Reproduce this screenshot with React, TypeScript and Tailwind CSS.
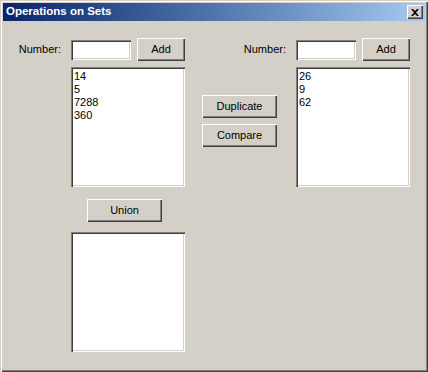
const sunken =
  'bg-white shadow-[inset_1px_1px_#808080,inset_2px_2px_#404040,inset_-1px_-1px_#ffffff,inset_-2px_-2px_#d4d0c8]'
const raised =
  'bg-[#d4d0c8] shadow-[inset_1px_1px_#ffffff,inset_-1px_-1px_#404040,inset_-2px_-2px_#808080] flex items-center justify-center text-black'

function Button({ label, className }: { label: string; className: string }) {
  return <button className={`${raised} ${className}`}>{label}</button>
}

function ListBox({ items, className }: { items: string[]; className: string }) {
  return (
    <div className={`${sunken} ${className} pt-[3px] pl-[3px] flex flex-col leading-[13px] text-black`}>
      {items.map((it) => (
        <span key={it}>{it}</span>
      ))}
    </div>
  )
}

export default function App() {
  const left = ['14', '5', '7288', '360']
  const right = ['26', '9', '62']

  return (
    <div
      className="w-[428px] h-[372px] bg-[#d4d0c8] p-[3px] flex flex-col text-[11px] shadow-[inset_1px_1px_#d4d0c8,inset_2px_2px_#ffffff,inset_-1px_-1px_#404040,inset_-2px_-2px_#808080]"
      style={{ fontFamily: '"Liberation Sans", Arial, sans-serif' }}
    >
      {/* Title bar */}
      <div className="h-[18px] w-[422px] flex items-center justify-between bg-gradient-to-r from-[#0a246a] to-[#a6caf0] pl-[3px] pr-[2px]">
        <span className="text-white font-bold text-[11.5px]">Operations on Sets</span>
        <div className={`${raised} w-[16px] h-[14px]`}>
          <svg width="8" height="7" viewBox="0 0 8 7">
            <path d="M0 0h2l2 2 2-2h2L5 3.5 8 7H6L4 5 2 7H0l3-3.5z" fill="#000" />
          </svg>
        </div>
      </div>

      {/* Number rows */}
      <div className="flex items-center mt-[17px] h-[23px]">
        <span className="w-[68px] text-right pr-[10px] text-black">Number:</span>
        <input className={`${sunken} w-[60px] h-[20px] outline-none px-[3px]`} />
        <Button label="Add" className="ml-[6px] w-[48px] h-[23px]" />
        <span className="ml-[51px] w-[60px] text-right pr-[10px] text-black">Number:</span>
        <input className={`${sunken} w-[60px] h-[20px] outline-none px-[3px]`} />
        <Button label="Add" className="ml-[6px] w-[48px] h-[23px]" />
      </div>

      {/* Lists + middle buttons */}
      <div className="flex mt-[6px]">
        <ListBox items={left} className="ml-[68px] w-[114px] h-[120px]" />
        <div className="ml-[17px] w-[75px] pt-[28px] flex flex-col gap-[6px]">
          <Button label="Duplicate" className="w-[75px] h-[23px]" />
          <Button label="Compare" className="w-[75px] h-[23px]" />
        </div>
        <ListBox items={right} className="ml-[19px] w-[114px] h-[120px]" />
      </div>

      <Button label="Union" className="mt-[12px] ml-[84px] w-[75px] h-[23px]" />

      <ListBox items={[]} className="mt-[10px] ml-[68px] w-[114px] h-[120px]" />
    </div>
  )
}
